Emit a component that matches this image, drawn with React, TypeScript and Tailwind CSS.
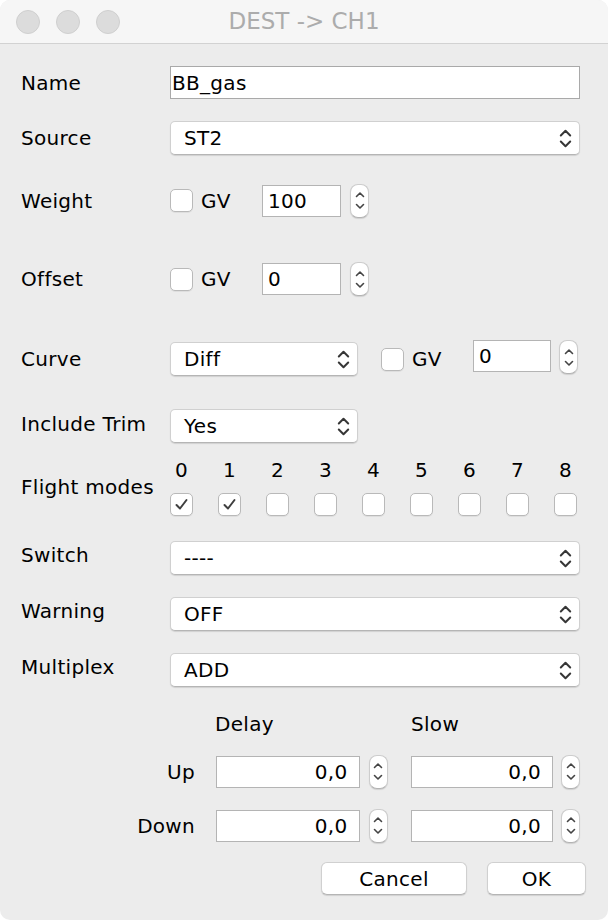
import React from "react"

const font = { fontFamily: '"DejaVu Sans", "Liberation Sans", sans-serif' }

function Chevrons() {
  return (
    <svg width="13" height="21" viewBox="0 0 13 21" className="shrink-0">
      <path d="M1.8 7.5 L6.5 2.8 L11.2 7.5" stroke="#363636" strokeWidth="2" fill="none" strokeLinecap="round" strokeLinejoin="round" />
      <path d="M1.8 13.5 L6.5 18.2 L11.2 13.5" stroke="#363636" strokeWidth="2" fill="none" strokeLinecap="round" strokeLinejoin="round" />
    </svg>
  )
}

function Select({ value, className }: { value: string; className: string }) {
  return (
    <div
      className={`flex items-center justify-between bg-white rounded-[5px] border border-[#d0d0d0] border-b-[#b5b5b5] shadow-[0_1px_1px_rgba(0,0,0,0.12)] pl-[13px] pr-[7px] ${className}`}
    >
      <span className="text-[20px] text-black leading-none">{value}</span>
      <Chevrons />
    </div>
  )
}

function Stepper() {
  return (
    <div className="w-[19px] h-[34px] shrink-0 rounded-[8px] bg-white border border-[#cdcdcd] border-b-[#b3b3b3] shadow-[0_1px_1px_rgba(0,0,0,0.12)] flex flex-col items-center justify-center gap-[5px]">
      <svg width="10" height="7" viewBox="0 0 10 7">
        <path d="M1.5 5.5 L5 2 L8.5 5.5" stroke="#444" strokeWidth="1.6" fill="none" strokeLinecap="round" strokeLinejoin="round" />
      </svg>
      <svg width="10" height="7" viewBox="0 0 10 7">
        <path d="M1.5 1.5 L5 5 L8.5 1.5" stroke="#444" strokeWidth="1.6" fill="none" strokeLinecap="round" strokeLinejoin="round" />
      </svg>
    </div>
  )
}

function NumInput({ value, className, right }: { value: string; className: string; right?: boolean }) {
  return (
    <div
      className={`h-[32px] bg-white border border-[#b4b4b4] flex items-center text-[20px] text-black leading-none ${right ? "justify-end pr-[11px]" : "pl-[5px]"} ${className}`}
    >
      {value}
    </div>
  )
}

function Check({ checked }: { checked?: boolean }) {
  return (
    <div className="w-[23px] h-[23px] shrink-0 rounded-[5px] bg-white border border-[#b9b9b9] shadow-[0_1px_0_rgba(0,0,0,0.06)] flex items-center justify-center">
      {checked && (
        <svg width="15" height="13" viewBox="0 0 15 13">
          <path d="M2.5 7 L6 10.5 L12.5 2" stroke="#3f3f3f" strokeWidth="2" fill="none" strokeLinecap="round" strokeLinejoin="round" />
        </svg>
      )}
    </div>
  )
}

function Label({ children }: { children: React.ReactNode }) {
  return <div className="w-[149px] shrink-0 text-[20px] text-black leading-none">{children}</div>
}

export default function App() {
  const modes = [0, 1, 2, 3, 4, 5, 6, 7, 8]

  return (
    <div className="w-[608px] h-[920px] bg-white tracking-[0.3px]" style={font}>
      <div className="w-[608px] h-[920px] rounded-[10px] overflow-hidden bg-[#ececec] flex flex-col">
        {/* Title bar */}
        <div className="h-[44px] shrink-0 bg-[#f6f6f6] border-b border-[#d2d2d2] flex items-center px-[16px]">
          <div className="flex gap-[16px]">
            <div className="w-[24px] h-[24px] rounded-full bg-[#dcdcdc] border border-[#cfcfcf]" />
            <div className="w-[24px] h-[24px] rounded-full bg-[#dcdcdc] border border-[#cfcfcf]" />
            <div className="w-[24px] h-[24px] rounded-full bg-[#dcdcdc] border border-[#cfcfcf]" />
          </div>
          <div className="flex-1 text-center text-[23px] text-[#acacac] -ml-[104px] leading-none tracking-normal">DEST -&gt; CH1</div>
        </div>

        <div className="pl-[21px] pr-[28px] flex flex-col">
          {/* Name */}
          <div className="flex items-center h-[33px] mt-[22px]">
            <Label>Name</Label>
            <div className="flex-1 h-[33px] bg-white border border-[#a9a9a9] flex items-center pl-[1px] text-[20px] leading-none text-black">BB_gas</div>
          </div>

          {/* Source */}
          <div className="flex items-center h-[34px] mt-[22px]">
            <Label>Source</Label>
            <Select value="ST2" className="flex-1 h-[34px]" />
          </div>

          {/* Weight */}
          <div className="flex items-center h-[33px] mt-[29px]">
            <Label>Weight</Label>
            <Check />
            <span className="ml-[8px] text-[20px] leading-none text-black w-[61px]">GV</span>
            <NumInput value="100" className="w-[79px]" />
            <div className="ml-[9px]"><Stepper /></div>
          </div>

          {/* Offset */}
          <div className="flex items-center h-[34px] mt-[45px]">
            <Label>Offset</Label>
            <Check />
            <span className="ml-[8px] text-[20px] leading-none text-black w-[61px]">GV</span>
            <NumInput value="0" className="w-[79px]" />
            <div className="ml-[9px]"><Stepper /></div>
          </div>

          {/* Curve */}
          <div className="flex items-center h-[36px] mt-[45px]">
            <Label>Curve</Label>
            <Select value="Diff" className="w-[188px] h-[34px]" />
            <div className="ml-[23px]"><Check /></div>
            <span className="ml-[8px] text-[20px] leading-none text-black w-[61px]">GV</span>
            <NumInput value="0" className="w-[78px] -mt-[6px]" />
            <div className="ml-[8px] -mt-[4px]"><Stepper /></div>
          </div>

          {/* Include Trim */}
          <div className="flex items-center h-[34px] mt-[32px]">
            <Label><span className="relative -top-[2px]">Include Trim</span></Label>
            <Select value="Yes" className="w-[188px] h-[34px]" />
          </div>

          {/* Flight modes */}
          <div className="flex items-center mt-[15px]">
            <Label>Flight modes</Label>
            <div className="flex gap-[25px]">
              {modes.map((m) => (
                <div key={m} className="flex flex-col items-center w-[23px]">
                  <span className="text-[20px] leading-[24px] text-black">{m}</span>
                  <div className="mt-[11px]">
                    <Check checked={m < 2} />
                  </div>
                </div>
              ))}
            </div>
          </div>

          {/* Switch */}
          <div className="flex items-center h-[34px] mt-[25px]">
            <Label><span className="relative -top-[3px]">Switch</span></Label>
            <Select value="----" className="flex-1 h-[34px]" />
          </div>

          {/* Warning */}
          <div className="flex items-center h-[34px] mt-[22px]">
            <Label><span className="relative -top-[3px]">Warning</span></Label>
            <Select value="OFF" className="flex-1 h-[34px]" />
          </div>

          {/* Multiplex */}
          <div className="flex items-center h-[34px] mt-[22px]">
            <Label><span className="relative -top-[3px]">Multiplex</span></Label>
            <Select value="ADD" className="flex-1 h-[34px]" />
          </div>

          {/* Delay / Slow header */}
          <div className="flex items-center h-[26px] mt-[24px] text-[20px] leading-none text-black">
            <span className="ml-[194px] w-[196px]">Delay</span>
            <span>Slow</span>
          </div>

          {/* Up */}
          <div className="flex items-center h-[33px] mt-[18px]">
            <div className="w-[176px] text-right text-[20px] leading-none text-black">Up</div>
            <NumInput value="0,0" right className="ml-[21px] w-[145px]" />
            <div className="ml-[9px]"><Stepper /></div>
            <NumInput value="0,0" right className="ml-[23px] w-[144px]" />
            <div className="ml-[8px]"><Stepper /></div>
          </div>

          {/* Down */}
          <div className="flex items-center h-[33px] mt-[21px]">
            <div className="w-[176px] text-right text-[20px] leading-none text-black">Down</div>
            <NumInput value="0,0" right className="ml-[21px] w-[145px]" />
            <div className="ml-[9px]"><Stepper /></div>
            <NumInput value="0,0" right className="ml-[23px] w-[144px]" />
            <div className="ml-[8px]"><Stepper /></div>
          </div>

          {/* Buttons */}
          <div className="flex justify-end gap-[20px] mt-[20px] -mr-[6px]">
            <button className="w-[146px] h-[33px] bg-white rounded-[6px] border border-[#d0d0d0] border-b-[#b5b5b5] shadow-[0_1px_1px_rgba(0,0,0,0.12)] text-[20px] leading-none text-black">
              Cancel
            </button>
            <button className="w-[99px] h-[33px] bg-white rounded-[6px] border border-[#d0d0d0] border-b-[#b5b5b5] shadow-[0_1px_1px_rgba(0,0,0,0.12)] text-[20px] leading-none text-black">
              OK
            </button>
          </div>
        </div>
      </div>
    </div>
  )
}
